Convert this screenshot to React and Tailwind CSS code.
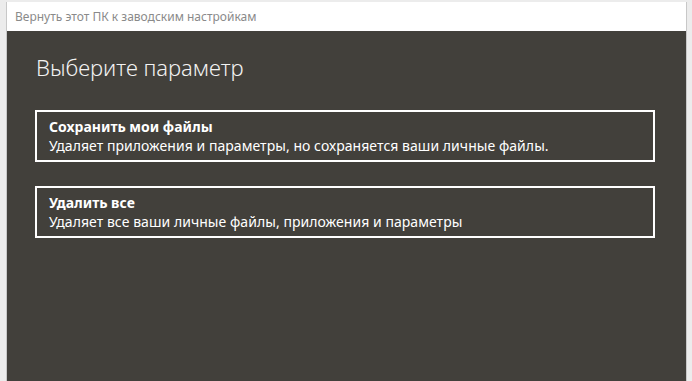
import React from 'react';

const Option = ({ title, text }) => (
  <div className="border-2 border-white px-[12px] pt-[5px] pb-[5px] text-white">
    <div className="text-[14px] leading-[19px] font-bold">{title}</div>
    <div className="text-[14px] leading-[19px] tracking-[0.05px]">{text}</div>
  </div>
);

export default function App() {
  return (
    <div
      className="w-[692px] h-[381px] bg-[#ececec] flex flex-col overflow-hidden"
      style={{ fontFamily: '"Noto Sans", "Open Sans", sans-serif' }}
    >
      <div className="h-[2px] shrink-0" />
      <div className="flex-1 ml-[6px] mr-[5px] border-l border-r border-[#c8c8c8] flex flex-col">
        {/* Title bar */}
        <div className="h-[29px] bg-white flex items-center pl-[8px] text-[12px] text-[#8a8a8a]">
          Вернуть этот ПК к заводским настройкам
        </div>

        {/* Body */}
        <div className="flex-1 bg-[#42403b] pl-[28px] pr-[31px] pt-[21px]">
          <h1 className="text-[22px] leading-[30px] text-[#f2f2f2] font-light pl-[1px]">
            Выберите параметр
          </h1>
          <div className="mt-[28px] flex flex-col gap-[24px]">
            <Option
              title="Сохранить мои файлы"
              text="Удаляет приложения и параметры, но сохраняется ваши личные файлы."
            />
            <Option
              title="Удалить все"
              text="Удаляет все ваши личные файлы, приложения и параметры"
            />
          </div>
        </div>
      </div>
    </div>
  );
}
